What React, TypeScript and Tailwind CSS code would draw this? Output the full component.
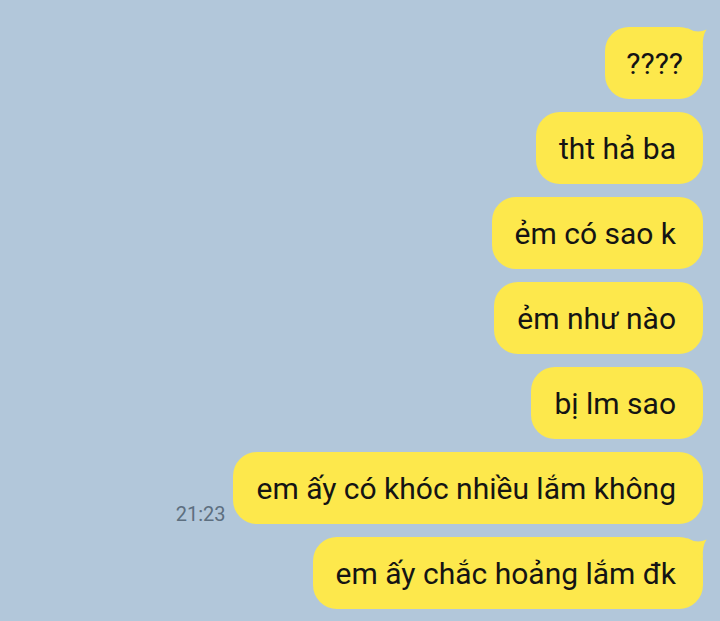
const messages = [
  { text: "????", tail: true, tight: true },
  { text: "tht hả ba" },
  { text: "ẻm có sao k" },
  { text: "ẻm như nào" },
  { text: "bị lm sao" },
  { text: "em ấy có khóc nhiều lắm không", time: "21:23" },
  { text: "em ấy chắc hoảng lắm đk", tail: true },
];

function Tail() {
  return (
    <svg
      className="absolute right-[-4px] top-0"
      width="24"
      height="24"
      viewBox="0 0 24 24"
    >
      <path d="M4 1 Q14 7 23.5 2.5 Q19 9 19.9 21 L10 14 Z" fill="#fde84c" />
    </svg>
  );
}

export default function App() {
  return (
    <div
      className="flex h-[621px] w-[720px] flex-col items-end gap-[13px] overflow-hidden bg-[#b2c7da] pr-[17px] pt-[27px]"
      style={{ fontFamily: "Roboto, 'Noto Sans', sans-serif" }}
    >
      {messages.map((m, i) => (
        <div key={i} className="flex items-end gap-[8px]">
          {m.time && (
            <span className="text-[20px] leading-none text-[#5d6f80]">{m.time}</span>
          )}
          <div
            className={
              m.tight
                ? "relative flex h-[72px] items-center rounded-[24px] bg-[#fde84c] pl-[21px] pr-[20px] text-[30px] text-[#141414]"
                : "relative flex h-[72px] items-center rounded-[24px] bg-[#fde84c] pl-[23px] pr-[27px] text-[30px] text-[#141414]"
            }
          >
            {m.tail && <Tail />}
            <span className="relative">{m.text}</span>
          </div>
        </div>
      ))}
    </div>
  );
}
